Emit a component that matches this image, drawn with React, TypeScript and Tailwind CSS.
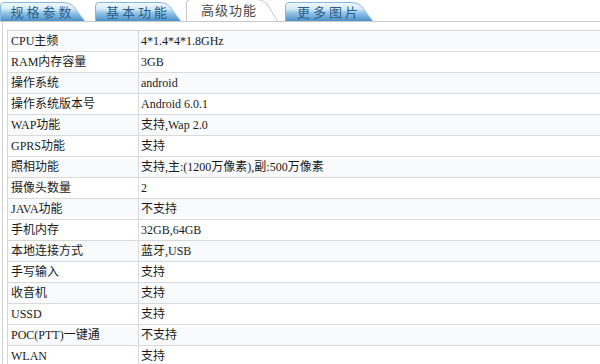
import { useId } from "react";
import type { ReactElement } from "react";

const specRows: ReadonlyArray<readonly [string, string]> = [
  ["CPU主频", "4*1.4*4*1.8GHz"],
  ["RAM内存容量", "3GB"],
  ["操作系统", "android"],
  ["操作系统版本号", "Android 6.0.1"],
  ["WAP功能", "支持,Wap 2.0"],
  ["GPRS功能", "支持"],
  ["照相功能", "支持,主:(1200万像素),副:500万像素"],
  ["摄像头数量", "2"],
  ["JAVA功能", "不支持"],
  ["手机内存", "32GB,64GB"],
  ["本地连接方式", "蓝牙,USB"],
  ["手写输入", "支持"],
  ["收音机", "支持"],
  ["USSD", "支持"],
  ["POC(PTT)一键通", "不支持"],
  ["WLAN", "支持"],
];

interface TabProps {
  readonly label: string;
  readonly width: number;
  readonly active?: boolean;
  readonly className?: string;
}

function Tab({ label, width, active = false, className = "" }: TabProps): ReactElement {
  const gradId = useId();
  const h = active ? 22 : 19;
  const w = width;
  const path = `M0.5,${h} L0.5,4 Q0.5,0.5 4,0.5 L${w - 22},0.5 Q${w - 15},0.5 ${w - 11},5 L${w - 0.5},${h}`;

  return (
    <div className={`relative flex shrink-0 items-center justify-center ${active ? "h-[22px]" : "h-[19px]"} ${className}`} style={{ width }}>
      <svg className="absolute inset-0" width={w} height={h} viewBox={`0 0 ${w} ${h}`} aria-hidden="true">
        <defs>
          <linearGradient id={gradId} x1="0" y1="0" x2="0" y2="1">
            <stop offset="0" stopColor="#f4f9fd" />
            <stop offset="0.35" stopColor="#d6eaf7" />
            <stop offset="0.55" stopColor="#96c7e8" />
            <stop offset="1" stopColor="#4a90c8" />
          </linearGradient>
        </defs>
        <path
          d={path}
          fill={active ? "#ffffff" : `url(#${gradId})`}
          stroke={active ? "#c6c6c6" : "#86b8de"}
          strokeWidth="1"
        />
      </svg>
      <span
        className={`relative text-[13px] leading-none ${
          active ? "pr-[6px] tracking-[1px] text-[#4a4a4a]" : "pt-[2px] tracking-[3px] text-[#2a5c8c]"
        }`}
      >
        {label}
      </span>
    </div>
  );
}

export default function App(): ReactElement {
  return (
    <div className="h-[364px] w-[600px] overflow-hidden bg-white font-['Liberation_Serif','Noto_Sans_CJK_SC',serif] text-[12px] text-[#1a1a1a]">
      <div className="flex h-[22px] items-end border-b border-[#c9c9c9]">
        <Tab label="规格参数" width={85} />
        <Tab label="基本功能" width={86} className="ml-[10px]" />
        <Tab label="高级功能" width={92} active className="ml-[5px]" />
        <Tab label="更多图片" width={88} className="ml-[7px]" />
      </div>

      <div className="ml-[2px] h-[342px] border-l border-[#d2d2d2] pl-[4px] pt-[8px]">
        <div className="border-l border-t border-[#d6d6d6]">
          {specRows.map(([label, value], i) => (
            <div
              key={label}
              className={`flex h-[21px] border-b border-[#d9d9d9] ${i % 2 === 0 ? "bg-[#f9fafc]" : "bg-white"}`}
            >
              <div className="w-[131px] shrink-0 border-r border-[#d9d9d9] pl-[3px] leading-[20px] whitespace-nowrap">
                {label}
              </div>
              <div className="pl-[2px] leading-[20px] whitespace-nowrap">{value}</div>
            </div>
          ))}
        </div>
      </div>
    </div>
  );
}
